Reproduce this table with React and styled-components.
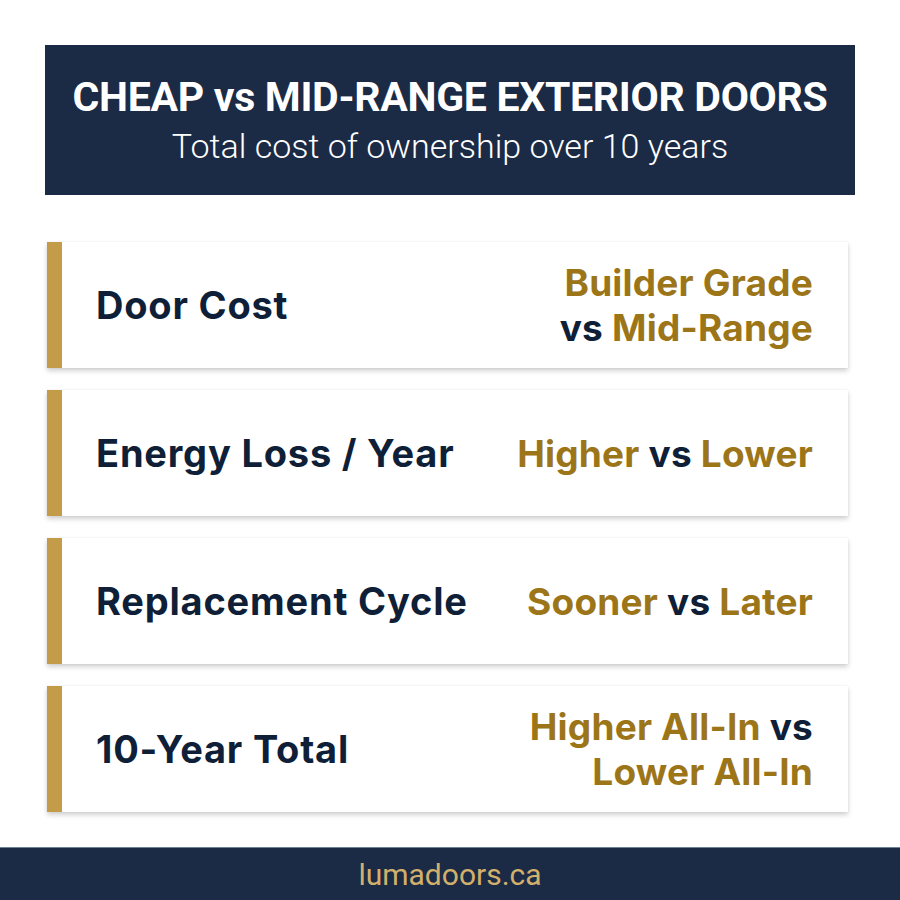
import React from "react";
import styled, { createGlobalStyle } from "styled-components";

const Global = createGlobalStyle`
  html, body { margin: 0; padding: 0; background: #ffffff; }
  body { font-family: Roboto, "Liberation Sans", sans-serif; }
  * { box-sizing: border-box; }
`;

const Page = styled.div`
  width: 900px;
  height: 900px;
  display: flex;
  flex-direction: column;
  background: #ffffff;
`;

const Header = styled.header`
  margin: 45px 45px 0 45px;
  height: 150px;
  background: #1b2a45;
  display: flex;
  flex-direction: column;
  align-items: center;
  justify-content: center;
  color: #ffffff;
`;

const Title = styled.h1`
  margin: 0;
  font-size: 41px;
  font-weight: 700;
  letter-spacing: -0.3px;
  line-height: 46px;
`;

const Subtitle = styled.p`
  margin: 6px 0 0 0;
  font-size: 34px;
  font-weight: 300;
  line-height: 40px;
`;

const List = styled.section`
  margin: 47px 52px 0 47px;
  display: flex;
  flex-direction: column;
  gap: 22px;
`;

const Card = styled.div`
  height: 126px;
  display: flex;
  align-items: center;
  justify-content: space-between;
  background: #ffffff;
  border-left: 15px solid #c49b48;
  box-shadow: 0 3px 5px rgba(0, 0, 0, 0.18), 0 0 2px rgba(0, 0, 0, 0.07);
  padding: 0 35px 0 34px;
  font-family: Inter, Roboto, sans-serif;
`;

const Label = styled.div`
  font-size: 38px;
  font-weight: 700;
  color: #0f1f38;
  letter-spacing: 0.8px;
`;

const Value = styled.div`
  font-size: 37px;
  font-weight: 700;
  line-height: 45px;
  text-align: right;
  color: #9c7519;
  letter-spacing: 0.2px;
`;

const Vs = styled.span`
  color: #0f1f38;
`;

const Footer = styled.footer`
  margin-top: auto;
  height: 53px;
  background: #1b2a45;
  border-top: 1px solid #6d8197;
  display: flex;
  align-items: center;
  justify-content: center;
  color: #d2b06c;
  font-size: 30px;
  font-weight: 400;
`;

const rows = [
  { label: "Door Cost", value: <>Builder Grade<br /><Vs>vs</Vs> Mid-Range</> },
  { label: "Energy Loss / Year", value: <>Higher <Vs>vs</Vs> Lower</> },
  { label: "Replacement Cycle", value: <>Sooner <Vs>vs</Vs> Later</> },
  { label: "10-Year Total", value: <>Higher All-In <Vs>vs</Vs><br />Lower All-In</> },
];

export default function App() {
  return (
    <>
      <Global />
      <Page>
        <Header>
          <Title>CHEAP vs MID-RANGE EXTERIOR DOORS</Title>
          <Subtitle>Total cost of ownership over 10 years</Subtitle>
        </Header>
        <List>
          {rows.map((r) => (
            <Card key={r.label}>
              <Label>{r.label}</Label>
              <Value>{r.value}</Value>
            </Card>
          ))}
        </List>
        <Footer>lumadoors.ca</Footer>
      </Page>
    </>
  );
}
